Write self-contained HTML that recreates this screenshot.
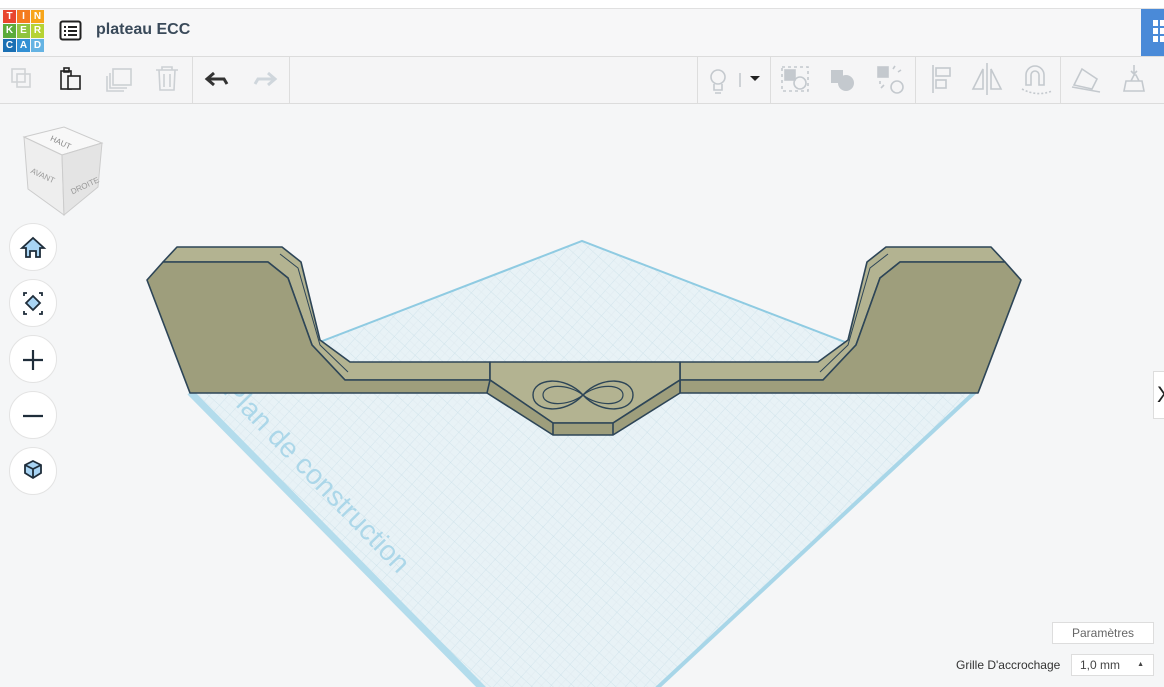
<!DOCTYPE html>
<html><head><meta charset="utf-8"><style>
body{margin:0;width:1164px;height:687px;overflow:hidden;background:#f5f6f7;font-family:"Liberation Sans",sans-serif;position:relative}
.top{position:absolute;left:0;top:0;width:1164px;height:8px;background:#fff;border-bottom:1px solid #e0e0e0}
.hdr{position:absolute;left:0;top:9px;width:1164px;height:47px;background:#f7f7f8;border-bottom:1px solid #dcdcdc}
.tb{position:absolute;left:0;top:57px;width:1164px;height:46px;background:#f5f5f6;border-bottom:1px solid #dcdcdc}
.logo{position:absolute;left:3px;top:10px;width:42px;height:42px;display:grid;grid-template-columns:repeat(3,13px);gap:1px}
.logo span{color:#fff;font-size:10px;font-weight:bold;text-align:center;line-height:13px}
.title{position:absolute;left:96px;top:21px;font-size:16px;font-weight:bold;color:#3a4a5a}
.sep{position:absolute;top:57px;width:1px;height:46px;background:#ddd}
.circ{position:absolute;left:9px;width:48px;height:48px;border-radius:50%;background:#fff;border:1px solid #e3e3e3;box-sizing:border-box}
.btn{position:absolute;background:#fff;border:1px solid #ddd;font-size:12px;color:#555;box-sizing:border-box}
</style></head><body>
<div class="top"></div>
<div class="hdr"></div>
<div class="logo">
<span style="background:#e8452e">T</span><span style="background:#f47b20">I</span><span style="background:#f7a51b">N</span>
<span style="background:#5bab3a">K</span><span style="background:#8fc43f">E</span><span style="background:#b6d334">R</span>
<span style="background:#1a6fb3">C</span><span style="background:#3390d4">A</span><span style="background:#65b3e3">D</span>
</div>
<svg style="position:absolute;left:59px;top:20px" width="23" height="22"><rect x="1.5" y="1.5" width="20" height="18" rx="2" fill="#fff" stroke="#222" stroke-width="2"/><g fill="#222"><rect x="5" y="6" width="2" height="2"/><rect x="9" y="6" width="9" height="2"/><rect x="5" y="10" width="2" height="2"/><rect x="9" y="10" width="9" height="2"/><rect x="5" y="14" width="2" height="2"/><rect x="9" y="14" width="9" height="2"/></g></svg>
<div class="title">plateau ECC</div>
<div style="position:absolute;left:1141px;top:9px;width:23px;height:47px;background:#4a8ad8"></div>
<svg style="position:absolute;left:1153px;top:20px" width="11" height="24"><g fill="#fff"><rect x="0" y="0" width="5" height="6"/><rect x="7" y="0" width="5" height="6"/><rect x="0" y="8" width="5" height="6"/><rect x="7" y="8" width="5" height="6"/><rect x="0" y="16" width="5" height="6"/><rect x="7" y="16" width="5" height="6"/></g></svg>
<div class="tb"></div>
<div class="sep" style="left:192px"></div><div class="sep" style="left:289px"></div>
<div class="sep" style="left:770px"></div><div class="sep" style="left:915px"></div><div class="sep" style="left:1060px"></div><div class="sep" style="left:697px"></div>
<svg style="position:absolute;left:0;top:57px" width="1164" height="46" fill="none" stroke-width="1.6">
<g stroke="#d0d3d6"><rect x="12" y="12" width="13" height="13"/><rect x="17" y="17" width="13" height="13"/></g>
<g stroke="#222"><rect x="61" y="14" width="10" height="18"/><rect x="68" y="19" width="12" height="13" fill="#f5f5f6"/><rect x="64" y="11" width="5" height="4"/></g>
<g stroke="#ccd0d4"><rect x="113" y="12" width="18" height="16"/><path d="M110 16v15h17"/><path d="M107 19v15h17"/></g>
<g stroke="#ccd0d4"><path d="M156 13h22M162 13v-3h10v3M159 13l1 20h14l1-20M164 17v13M170 17v13"/></g>
<path d="M208 22h16l3 5M214 16l-7 6 7 6" stroke="#333" stroke-width="3"/>
<path d="M274 22h-16l-3 5M268 16l7 6-7 6" stroke="#cfd6dc" stroke-width="3"/>
<g stroke="#c4c9ce"><circle cx="718" cy="20" r="7"/><path d="M714 27v6h8v-6M715 36h6"/><path d="M740 16v14"/></g>
<path d="M750 19h10l-5 5z" fill="#222"/>
<g stroke="#c4c9ce"><rect x="782" y="10" width="26" height="24" stroke-dasharray="3 3"/><rect x="785" y="13" width="10" height="10" fill="#c4c9ce"/><circle cx="800" cy="26" r="6"/></g>
<g fill="#c4c9ce"><rect x="831" y="13" width="12" height="13"/><circle cx="846" cy="26" r="8"/></g>
<g stroke="#c4c9ce"><rect x="878" y="10" width="10" height="10" fill="#c4c9ce"/><circle cx="897" cy="30" r="6"/><path d="M893 12l2-3M898 15l3-2M880 24v3M884 28l-3 3"/></g>
<g stroke="#c4c9ce"><path d="M933 8v28"/><rect x="936" y="11" width="14" height="8"/><rect x="936" y="23" width="10" height="8"/></g>
<g stroke="#c4c9ce"><path d="M987 6v32M983 12l-10 20h10zM991 12l10 20h-10z"/></g>
<g stroke="#c4c9ce"><path d="M1026 28v-10a9 9 0 0 1 18 0v10h-5v-10a4 4 0 0 0-8 0v10z"/><path d="M1022 32q15 8 30 2" stroke-dasharray="2 2"/></g>
<g stroke="#c4c9ce"><path d="M1074 28l8-16 15 10-5 10zM1072 30l28 5"/></g>
<g stroke="#c4c9ce"><path d="M1124 34h20l-2-10h-16zM1131 24l3-6h2l3 6M1134 8v9l-3-3M1134 17l3-3"/></g>
</svg>
<svg style="position:absolute;left:0;top:104px" width="1164" height="583" viewBox="0 104 1164 583">
<defs>
<pattern id="g" width="14" height="14" patternUnits="userSpaceOnUse" patternTransform="rotate(42)"><path d="M0 0h14M0 0v14" stroke="#c9dfe8" stroke-width="0.7"/><path d="M0 7h14M7 0v14" stroke="#dde9ee" stroke-width="0.4"/></pattern>
</defs>
<polygon points="582,241 975,392 657,687 482,687 190,392" fill="#e8f2f6"/>
<polygon points="582,241 975,392 657,687 482,687 190,392" fill="url(#g)"/>
<polyline points="190,392 582,241 975,392" fill="none" stroke="#8fcbe2" stroke-width="2"/>
<path d="M190,392 L484,690" stroke="#b3dcec" stroke-width="7" fill="none"/>
<path d="M975,392 L655,690" stroke="#a8d6e8" stroke-width="4"/>
<text x="0" y="0" transform="translate(222,392) rotate(46)" font-size="28" fill="#acd7e9" font-family="Liberation Sans">Plan de construction</text>
<g stroke="#2d4557" stroke-width="1.6" stroke-linejoin="round">
<polygon points="163,262 177,247 282,247 301,262 320,340 350,362 490,362 490,380 345,380 312,345 288,278 268,262" fill="#b3b391"/>
<polygon points="147,280 163,262 268,262 288,278 312,345 345,380 490,380 490,393 190,393" fill="#9e9e7c"/>
<polyline points="280,254 298,268 320,345 348,372" fill="none" stroke-width="1"/>
<polygon points="1005,262 991,247 886,247 867,262 848,340 818,362 680,362 680,380 823,380 856,345 880,278 900,262" fill="#b3b391"/>
<polygon points="1021,280 1005,262 900,262 880,278 856,345 823,380 680,380 680,393 978,393" fill="#9e9e7c"/>
<polyline points="888,254 870,268 848,345 820,372" fill="none" stroke-width="1"/>
<polygon points="490,362 680,362 680,380 613,423 553,423 490,380" fill="#b3b391"/>
<polygon points="487,393 490,380 553,423 613,423 680,380 680,393 613,435 553,435" fill="#9e9e7c"/>
<path d="M553,423v12M613,423v12" fill="none"/>
<path d="M583,395 C565,375 533,378 533,395 C533,412 565,415 583,395 C601,375 633,378 633,395 C633,412 601,415 583,395Z" fill="none" stroke-width="1.4"/>
<path d="M583,395 C568,383 543,384 543,395 C543,406 568,407 583,395 C598,383 623,384 623,395 C623,406 598,407 583,395Z" fill="none" stroke-width="1.2"/>
</g>
</svg>
<svg style="position:absolute;left:20px;top:125px" width="86" height="92">
<polygon points="4,12 44,2 82,18 42,30" fill="#f8f8f8" stroke="#ccc"/>
<polygon points="4,12 42,30 44,90 8,64" fill="#eeeeee" stroke="#ccc"/>
<polygon points="42,30 82,18 78,62 44,90" fill="#e4e4e4" stroke="#ccc"/>
<text x="30" y="18" font-size="8" fill="#888" transform="rotate(25 36 16)">HAUT</text>
<text x="10" y="52" font-size="8" fill="#999" transform="rotate(25 20 50)">AVANT</text>
<text x="48" y="66" font-size="8" fill="#999" transform="rotate(-25 58 58)">DROITE</text>
</svg>
<div class="circ" style="top:223px"></div><div class="circ" style="top:279px"></div><div class="circ" style="top:335px"></div><div class="circ" style="top:391px"></div><div class="circ" style="top:447px"></div>
<svg style="position:absolute;left:0;top:223px" width="70" height="280" fill="none" stroke="#1f2d3a" stroke-width="1.8">
<path d="M22 25l11-10 11 10h-4v9h-4v-6h-6v6h-4v-9z" fill="#a8d4f4"/>
<path d="M24 73v-3h3M42 73v-3h-3M24 88v3h3M42 88v3h-3"/>
<path d="M33 73l7 7-7 7-7-7z" fill="#a8d4f4"/>
<path d="M23 137h20M33 127v20" stroke-width="2.2"/>
<path d="M23 193h20" stroke-width="2.2"/>
<path d="M33 238l8 4v8l-8 5-8-5v-8z" fill="#a8d4f4"/><path d="M25 242l8 4 8-4M33 246v9"/>
</svg>
<div style="position:absolute;left:1153px;top:371px;width:11px;height:46px;background:#fff;border:1px solid #ddd;font-size:22px;color:#222;line-height:46px;padding-left:3px">X</div>
<div class="btn" style="left:1052px;top:622px;width:102px;height:22px;text-align:center;line-height:20px;color:#666">Paramètres</div>
<div style="position:absolute;left:956px;top:658px;font-size:12px;color:#333">Grille D'accrochage</div>
<div class="btn" style="left:1071px;top:654px;width:83px;height:22px;line-height:20px;padding-left:8px;color:#444">1,0 mm<span style="position:absolute;right:9px;font-size:7px">▲</span></div>
</body></html>
